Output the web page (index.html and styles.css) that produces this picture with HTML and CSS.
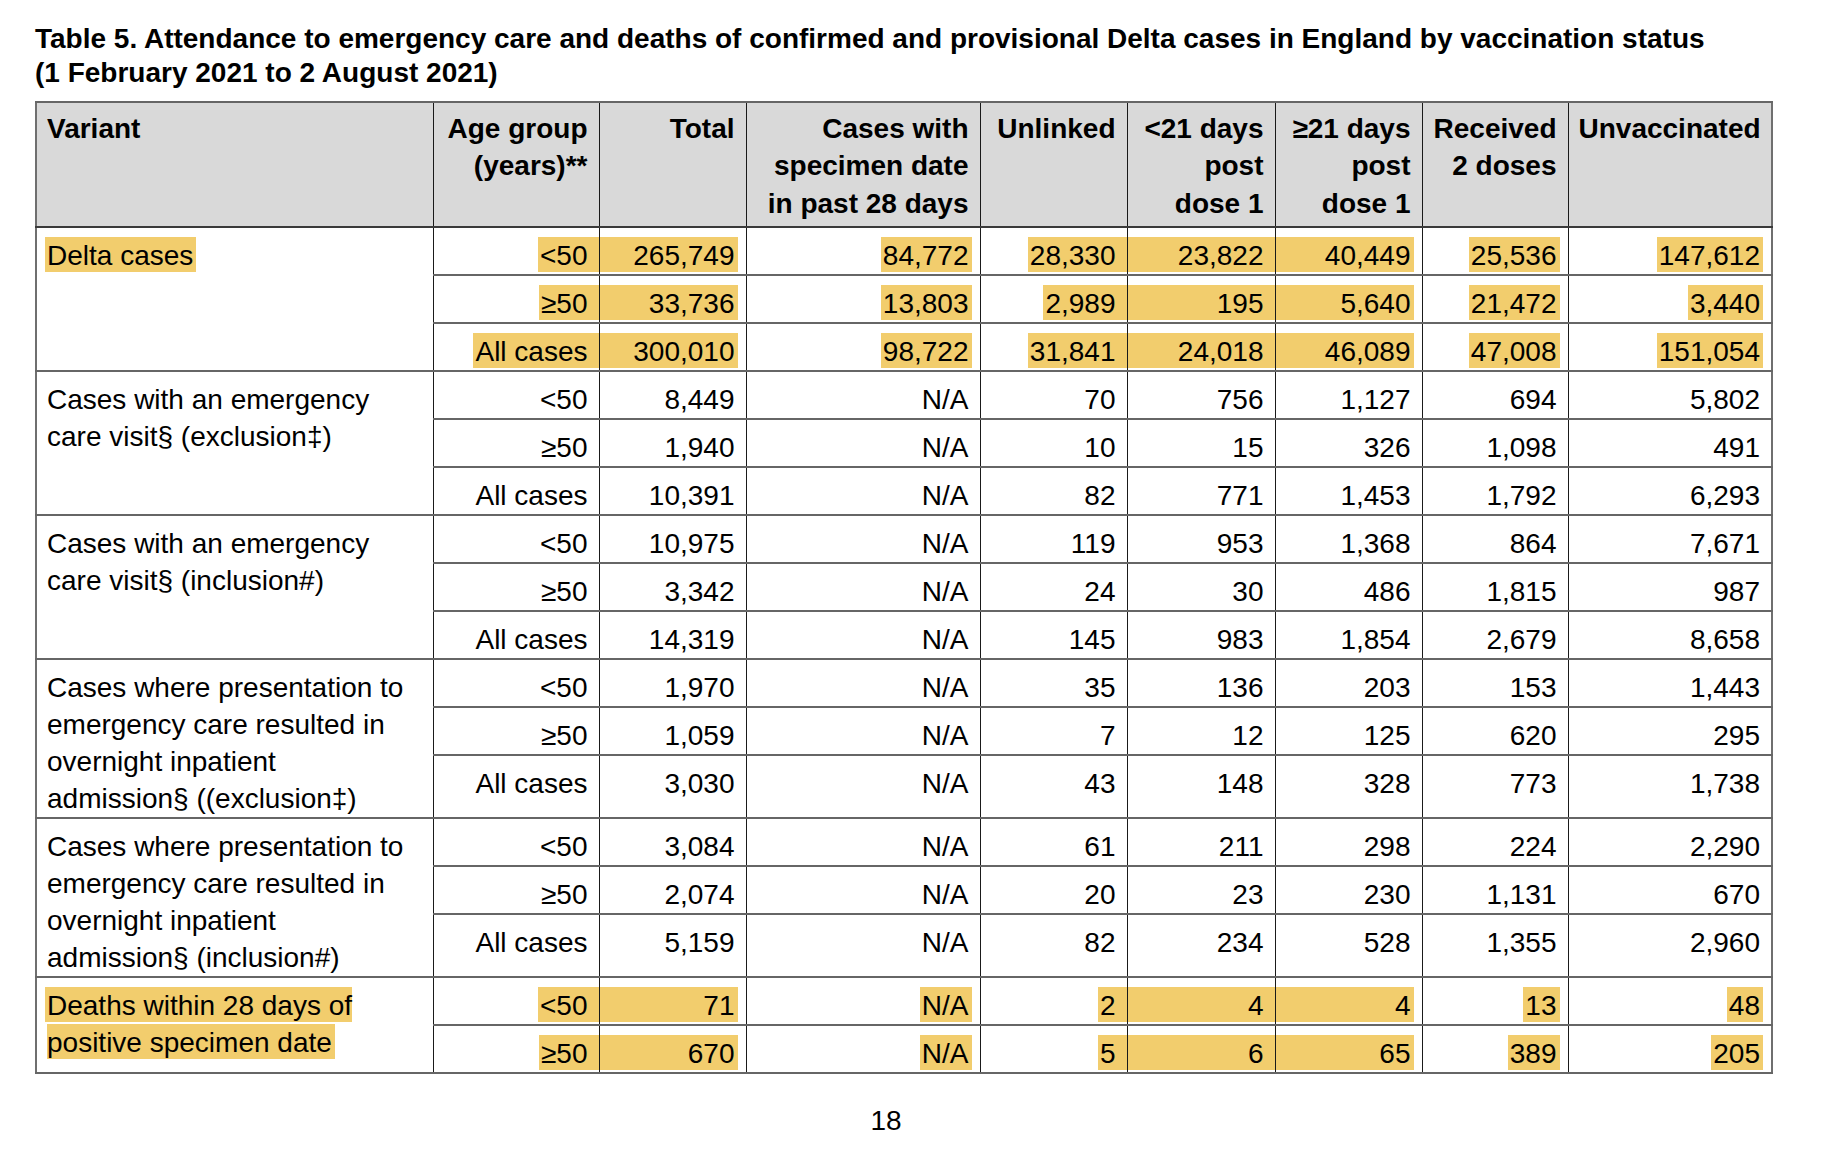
FILE: index.html
```html
<!DOCTYPE html>
<html lang="en">
<head>
<meta charset="utf-8">
<title>Table 5</title>
<link rel="stylesheet" href="styles.css">
</head>
<body>
<div class="page">
  <h1 class="title">Table 5. Attendance to emergency care and deaths of confirmed and provisional Delta cases in England by vaccination status<br>(1 February 2021 to 2 August 2021)</h1>
  <table class="data">
    <colgroup>
      <col class="c-variant"><col class="c-age"><col class="c-total"><col class="c-spec"><col class="c-unl"><col class="c-lt21"><col class="c-ge21"><col class="c-two"><col class="c-unvac">
    </colgroup>
    <thead>
      <tr>
        <th class="left">Variant</th>
        <th>Age group (years)**</th>
        <th>Total</th>
        <th>Cases with specimen date in past 28 days</th>
        <th>Unlinked</th>
        <th>&lt;21 days post dose 1</th>
        <th>≥21 days post dose 1</th>
        <th>Received 2 doses</th>
        <th>Unvaccinated</th>
      </tr>
    </thead>
    <tbody>
      <tr class="row">
        <td class="left" rowspan="3"><span class="hl hl-start">Delta cases</span></td>
        <td><span class="hl hl-r">&lt;50</span></td>
        <td><span class="hl-l">265,749</span></td>
        <td><span class="hl">84,772</span></td>
        <td><span class="hl hl-r">28,330</span></td>
        <td><span class="hl-full">23,822</span></td>
        <td><span class="hl-l">40,449</span></td>
        <td><span class="hl">25,536</span></td>
        <td><span class="hl">147,612</span></td>
      </tr>
      <tr class="row">
        <td><span class="hl hl-r">≥50</span></td>
        <td><span class="hl-l">33,736</span></td>
        <td><span class="hl">13,803</span></td>
        <td><span class="hl hl-r">2,989</span></td>
        <td><span class="hl-full">195</span></td>
        <td><span class="hl-l">5,640</span></td>
        <td><span class="hl">21,472</span></td>
        <td><span class="hl">3,440</span></td>
      </tr>
      <tr class="row">
        <td><span class="hl hl-r">All cases</span></td>
        <td><span class="hl-l">300,010</span></td>
        <td><span class="hl">98,722</span></td>
        <td><span class="hl hl-r">31,841</span></td>
        <td><span class="hl-full">24,018</span></td>
        <td><span class="hl-l">46,089</span></td>
        <td><span class="hl">47,008</span></td>
        <td><span class="hl">151,054</span></td>
      </tr>

      <tr class="row">
        <td class="left" rowspan="3">Cases with an emergency care visit§ (exclusion‡)</td>
        <td>&lt;50</td><td>8,449</td><td>N/A</td><td>70</td><td>756</td><td>1,127</td><td>694</td><td>5,802</td>
      </tr>
      <tr class="row">
        <td>≥50</td><td>1,940</td><td>N/A</td><td>10</td><td>15</td><td>326</td><td>1,098</td><td>491</td>
      </tr>
      <tr class="row">
        <td>All cases</td><td>10,391</td><td>N/A</td><td>82</td><td>771</td><td>1,453</td><td>1,792</td><td>6,293</td>
      </tr>

      <tr class="row">
        <td class="left" rowspan="3">Cases with an emergency care visit§ (inclusion#)</td>
        <td>&lt;50</td><td>10,975</td><td>N/A</td><td>119</td><td>953</td><td>1,368</td><td>864</td><td>7,671</td>
      </tr>
      <tr class="row">
        <td>≥50</td><td>3,342</td><td>N/A</td><td>24</td><td>30</td><td>486</td><td>1,815</td><td>987</td>
      </tr>
      <tr class="row">
        <td>All cases</td><td>14,319</td><td>N/A</td><td>145</td><td>983</td><td>1,854</td><td>2,679</td><td>8,658</td>
      </tr>

      <tr class="row">
        <td class="left multi" rowspan="3">Cases where presentation to emergency care resulted in overnight inpatient admission§ ((exclusion‡)</td>
        <td>&lt;50</td><td>1,970</td><td>N/A</td><td>35</td><td>136</td><td>203</td><td>153</td><td>1,443</td>
      </tr>
      <tr class="row">
        <td>≥50</td><td>1,059</td><td>N/A</td><td>7</td><td>12</td><td>125</td><td>620</td><td>295</td>
      </tr>
      <tr class="row-tall">
        <td>All cases</td><td>3,030</td><td>N/A</td><td>43</td><td>148</td><td>328</td><td>773</td><td>1,738</td>
      </tr>

      <tr class="row">
        <td class="left multi" rowspan="3">Cases where presentation to emergency care resulted in overnight inpatient admission§ (inclusion#)</td>
        <td>&lt;50</td><td>3,084</td><td>N/A</td><td>61</td><td>211</td><td>298</td><td>224</td><td>2,290</td>
      </tr>
      <tr class="row">
        <td>≥50</td><td>2,074</td><td>N/A</td><td>20</td><td>23</td><td>230</td><td>1,131</td><td>670</td>
      </tr>
      <tr class="row-tall">
        <td>All cases</td><td>5,159</td><td>N/A</td><td>82</td><td>234</td><td>528</td><td>1,355</td><td>2,960</td>
      </tr>

      <tr class="row">
        <td class="left" rowspan="2"><span class="hl hl-start">Deaths within 28 days of positive specimen date</span></td>
        <td><span class="hl hl-r">&lt;50</span></td>
        <td><span class="hl-l">71</span></td>
        <td><span class="hl">N/A</span></td>
        <td><span class="hl hl-r">2</span></td>
        <td><span class="hl-full">4</span></td>
        <td><span class="hl-l">4</span></td>
        <td><span class="hl">13</span></td>
        <td><span class="hl">48</span></td>
      </tr>
      <tr class="row">
        <td><span class="hl hl-r">≥50</span></td>
        <td><span class="hl-l">670</span></td>
        <td><span class="hl">N/A</span></td>
        <td><span class="hl hl-r">5</span></td>
        <td><span class="hl-full">6</span></td>
        <td><span class="hl-l">65</span></td>
        <td><span class="hl">389</span></td>
        <td><span class="hl">205</span></td>
      </tr>
    </tbody>
  </table>
  <div class="page-number">18</div>
</div>
</body>
</html>
```

FILE: styles.css
```css
html, body {
  margin: 0;
  padding: 0;
  background: #ffffff;
}

body {
  font-family: "Liberation Sans", Arial, sans-serif;
  color: #000000;
}

.page {
  width: 1736px;
  padding: 22px 0 0 35px;
}

.title {
  margin: 0 0 12px 0;
  font-size: 28px;
  line-height: 33.5px;
  font-weight: bold;
}

.data {
  width: 1736px;
  table-layout: fixed;
  border-collapse: collapse;
  border: 2px solid #6f6f6f;
  font-size: 28px;
  line-height: 37.5px;
}

.c-variant { width: 397px; }
.c-age { width: 166px; }
.c-total { width: 147px; }
.c-spec { width: 234px; }
.c-unl { width: 147px; }
.c-lt21 { width: 148px; }
.c-ge21 { width: 147px; }
.c-two { width: 146px; }
.c-unvac { width: 204px; }

.row { height: 48px; }
.row-tall { height: 63px; }

.data th,
.data td {
  text-align: right;
  vertical-align: top;
  border-left: 1px solid #1a1a1a;
  border-right: 1px solid #1a1a1a;
  border-top: 2px solid #666666;
  border-bottom: 2px solid #666666;
  padding: 8.5px 11px 0 10px;
}

.data th {
  background: #d9d9d9;
  font-weight: bold;
  padding-top: 6.5px;
  padding-bottom: 4px;
  border-bottom-color: #3a3a3a;
}

.data .left {
  text-align: left;
}

.data .multi {
  line-height: 37px;
}

/* highlighting */
.hl {
  background: #f2cd6d;
  padding: 3px 3px 1px 2px;
  margin-right: -3px;
}

.hl-start {
  margin-left: -2px;
  margin-right: 0;
}

.hl-r {
  padding-right: 11px;
  margin-right: -11px;
}

.hl-l {
  display: block;
  margin-left: -10px;
  margin-right: -3px;
  padding-right: 3px;
  background: linear-gradient(#f2cd6d, #f2cd6d) no-repeat 0 0.5px / 100% 35px;
}

.hl-full {
  display: block;
  margin-left: -10px;
  margin-right: -11px;
  padding-right: 11px;
  background: linear-gradient(#f2cd6d, #f2cd6d) no-repeat 0 0.5px / 100% 35px;
}

.page-number {
  margin-top: 28px;
  padding-right: 34px;
  text-align: center;
  font-size: 28px;
  line-height: 37.5px;
}
```
